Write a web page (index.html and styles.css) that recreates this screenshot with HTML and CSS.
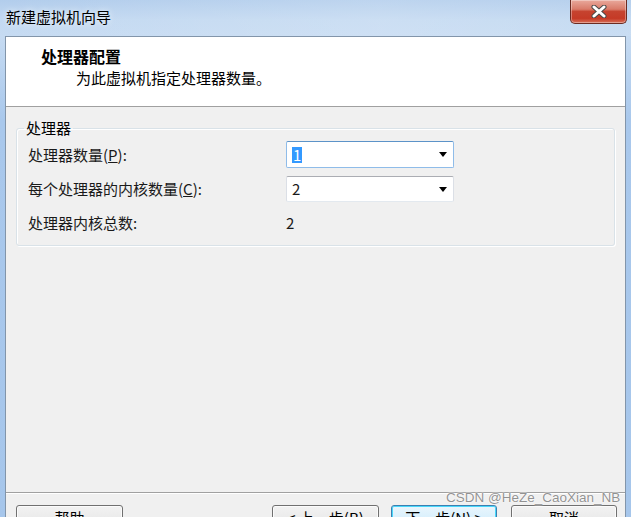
FILE: index.html
```html
<!DOCTYPE html>
<html lang="zh-CN">
<head>
<meta charset="utf-8">
<title>新建虚拟机向导</title>
<link rel="stylesheet" href="styles.css">
</head>
<body>
<div class="window">
  <div class="titlebar">
    <span class="title">新建虚拟机向导</span>
    <div class="close">
      <svg width="16" height="13" viewBox="0 0 16 13">
        <path d="M3 2 L13 11 M13 2 L3 11" stroke="#4a4a4a" stroke-width="5" stroke-linecap="round"/>
        <path d="M3 2 L13 11 M13 2 L3 11" stroke="#ffffff" stroke-width="3" stroke-linecap="round"/>
      </svg>
    </div>
  </div>
  <div class="client">
    <div class="header">
      <div class="h-title">处理器配置</div>
      <div class="h-sub">为此虚拟机指定处理器数量。</div>
    </div>
    <div class="content">
      <fieldset class="group">
        <legend>处理器</legend>
        <div class="grid">
          <div class="label">处理器数量(<u>P</u>):</div>
          <div class="combo focus"><span class="sel">1</span><span class="arrow"></span></div>
          <div class="label">每个处理器的内核数量(<u>C</u>):</div>
          <div class="combo"><span class="val">2</span><span class="arrow"></span></div>
          <div class="label total">处理器内核总数:</div>
          <div class="value total">2</div>
        </div>
      </fieldset>
    </div>
    <div class="footer">
      <button class="btn help">帮助</button>
      <button class="btn back">&lt; 上一步(<u>B</u>)</button>
      <button class="btn next">下一步(<u>N</u>) &gt;</button>
      <button class="btn cancel">取消</button>
    </div>
  </div>
  <div class="watermark">CSDN @HeZe_CaoXian_NB</div>
</div>
</body>
</html>
```

FILE: styles.css
```css
html, body {
  margin: 0;
  padding: 0;
  width: 631px;
  height: 517px;
  overflow: hidden;
}

body {
  font-family: "Noto Sans CJK SC", "Liberation Sans", sans-serif;
  font-size: 15px;
  color: #1a1a1a;
}

.window {
  position: relative;
  width: 631px;
  height: 545px;
  display: flex;
  flex-direction: column;
  background: linear-gradient(to bottom, #b2cdec 0px, #c3d9f1 20px, #c6dbf2 36px, #a9c8ec 120px, #a6c6eb 100%);
}

.titlebar {
  height: 36px;
  display: flex;
  align-items: flex-start;
  background: linear-gradient(to right, rgba(255,255,255,0) 0%, rgba(255,255,255,0.15) 60%, rgba(255,255,255,0.05) 100%);
}

.title {
  margin: 8px 0 0 6px;
  line-height: 18px;
  font-size: 15px;
  color: #000;
  text-shadow: 0 0 6px rgba(255,255,255,0.9);
}

.close {
  margin-left: auto;
  margin-right: 4px;
  width: 55px;
  height: 23px;
  border: 1px solid #6b2b22;
  border-top: none;
  border-radius: 0 0 5px 5px;
  background: linear-gradient(to bottom, #e9a99c 0%, #d97b6a 40%, #c6432f 50%, #c53a26 80%, #d8705a 100%);
  box-shadow: inset 0 0 0 1px rgba(255,255,255,0.35);
  display: flex;
  align-items: center;
  justify-content: center;
}

.client {
  flex: 1;
  margin: 0 5px 0 5px;
  border: 1px solid #8295aa;
  border-bottom: none;
  background: #f0f0f0;
  display: flex;
  flex-direction: column;
}

.header {
  height: 69px;
  background: #ffffff;
  border-bottom: 1px solid #a0a0a0;
  box-sizing: content-box;
}

.h-title {
  margin: 9px 0 0 35px;
  font-size: 16px;
  font-weight: bold;
  line-height: 20px;
  color: #000;
}

.h-sub {
  margin: 2px 0 0 70px;
  line-height: 20px;
  color: #000;
}

.content {
  flex: 1;
}

.group {
  margin: 12px 10px 0 10px;
  padding: 0 11px 15px 11px;
  border: 1px solid #d9e2e8;
  border-radius: 3px;
  box-shadow: inset 1px 1px 0 #ffffff, 1px 1px 0 #ffffff;
}

.group legend {
  margin-left: -4px;
  padding: 0 2px;
  line-height: 18px;
  color: #000;
}

.grid {
  margin-top: 4px;
  display: grid;
  grid-template-columns: 258px 168px;
  grid-template-rows: 27px 26px 20px;
  row-gap: 8px;
  align-items: center;
}

.label {
  line-height: 20px;
  color: #1a1a1a;
}

.label.total, .value.total {
  margin-top: 6px;
}

.value {
  padding-left: 0;
  line-height: 20px;
}

.combo {
  box-sizing: border-box;
  height: 100%;
  display: flex;
  align-items: center;
  justify-content: space-between;
  padding: 0 6px 0 5px;
  background: #ffffff;
  border: 1px solid #dbdfe6;
  border-top-color: #abadb3;
  border-bottom-color: #e3e9ef;
  border-radius: 2px;
}

.combo.focus {
  border-color: #8fbce9;
  border-top-color: #5c93c8;
}

.sel {
  background: #3399ff;
  color: #ffffff;
  line-height: 16px;
  padding: 0 1px;
}

.val {
  line-height: 18px;
}

.arrow {
  width: 0;
  height: 0;
  border-left: 4px solid transparent;
  border-right: 4px solid transparent;
  border-top: 5px solid #000;
}

.footer {
  border-top: 1px solid #a0a0a0;
  box-shadow: inset 0 1px 0 #ffffff;
  padding: 12px 8px 14px 10px;
  display: flex;
  align-items: flex-start;
}

.btn {
  font-family: "Noto Sans CJK SC", "Liberation Sans", sans-serif;
  font-size: 15px;
  color: #000;
  height: 26px;
  width: 107px;
  padding: 0;
  line-height: 24px;
  border: 1px solid #707070;
  border-radius: 3px;
  background: linear-gradient(to bottom, #f2f2f2 0%, #ebebeb 50%, #dddddd 50%, #cfcfcf 100%);
  box-shadow: inset 0 0 0 1px #fbfbfb;
}

.back {
  margin-left: auto;
}

.next {
  width: 106px;
  margin-left: 12px;
  border-color: #3c7fb1;
  background: linear-gradient(to bottom, #eaf6fd 0%, #d9f0fc 50%, #bee6fd 50%, #a7d9f5 100%);
  box-shadow: inset 0 0 0 1px #48d8fb;
}

.cancel {
  width: 106px;
  margin-left: 14px;
}

.watermark {
  position: absolute;
  left: 446px;
  top: 490px;
  font-family: "Liberation Sans", sans-serif;
  font-size: 13.5px;
  line-height: 16px;
  color: rgba(110, 110, 110, 0.75);
  text-shadow: 0 0 2px #ffffff, 0 0 1px #ffffff;
  white-space: nowrap;
}
```
